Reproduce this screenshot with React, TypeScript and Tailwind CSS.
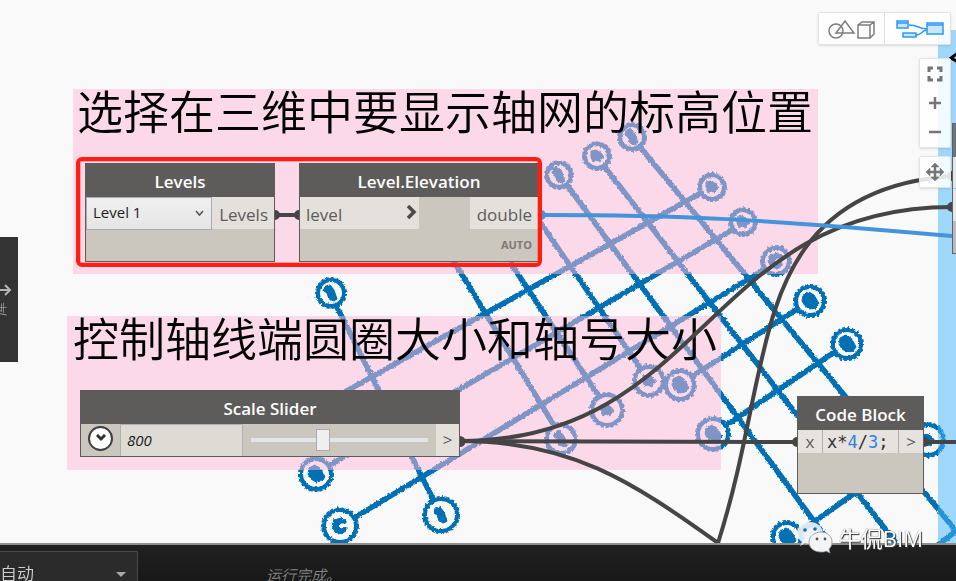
import React from 'react';

type Point = [number, number];

const gridLines: [Point, Point][] = [
  [[336, 305], [434, 501]],
  [[453, 260], [555, 427]],
  [[510, 262], [600, 398]],
  [[540, 222], [641, 369]],
  [[567, 185], [830, 543]],
  [[604, 166], [896, 543]],
  [[640, 147], [966, 543]],
  [[701, 193], [300, 417]],
  [[732, 230], [330, 465]],
  [[765, 269], [354, 518]],
  [[799, 308], [691, 377]],
  [[836, 351], [725, 426]],
  [[920, 447], [798, 533]],
  [[956, 531], [938, 545]],
];

const bubbles: { x: number; y: number; r: number; shape: number }[] = [
  { x: 559, y: 175, r: 12, shape: 1 },
  { x: 597, y: 156, r: 12, shape: 0 },
  { x: 632, y: 137, r: 12, shape: 1 },
  { x: 712, y: 187, r: 12, shape: 0 },
  { x: 743, y: 222, r: 12, shape: 0 },
  { x: 776, y: 261, r: 13, shape: 2 },
  { x: 810, y: 301, r: 14, shape: 3 },
  { x: 847, y: 344, r: 14, shape: 3 },
  { x: 331, y: 293, r: 13, shape: 1 },
  { x: 441, y: 515, r: 16, shape: 1 },
  { x: 316, y: 474, r: 15, shape: 3 },
  { x: 340, y: 526, r: 16, shape: 2 },
  { x: 561, y: 439, r: 14, shape: 1 },
  { x: 607, y: 410, r: 15, shape: 0 },
  { x: 649, y: 381, r: 14, shape: 0 },
  { x: 680, y: 385, r: 14, shape: 3 },
  { x: 713, y: 434, r: 15, shape: 3 },
  { x: 928, y: 440, r: 15, shape: 0 },
  { x: 787, y: 537, r: 14, shape: 3 },
];

const marks = [
  'M-6-5L-1-6L4-3L7 1L4 3L3 6L-1 4L-4 6L-6 1Z',
  'M-6-7L-1-8L3-3L6 6L3 8L-2 6L-4 0L-7-2Z',
  'M-6-6L1-8L6-6L6-3L1-3L-2 0L1 3L6 1L6 5L1 8L-5 6L-8 0Z',
  'M-7-6L-1-9L4-6L7-1L9 3L6 7L0 8L-5 5L-8 0Z',
];

const Geometry: React.FC = () => (
  <svg className="absolute inset-0 h-full w-full" aria-hidden="true">
    <defs>
      <filter id="rough" filterUnits="userSpaceOnUse" x="280" y="110" width="700" height="450">
        <feTurbulence type="fractalNoise" baseFrequency="0.4" numOctaves="2" seed="4" />
        <feDisplacementMap in="SourceGraphic" scale="3" xChannelSelector="R" yChannelSelector="G" />
      </filter>
    </defs>
    <g filter="url(#rough)" stroke="#0070b5" fill="none">
      {gridLines.map(([a, b], i) => (
        <line key={i} x1={a[0]} y1={a[1]} x2={b[0]} y2={b[1]} strokeWidth="5.500" />
      ))}
      {bubbles.map((b, i) => (
        <g key={i} transform={`translate(${b.x} ${b.y})`}>
          <circle r={b.r} strokeWidth="4" fill="#f9f9f9" />
          <circle r={b.r + 2} strokeWidth="2" strokeDasharray="3 2" />
          <path d={marks[b.shape]} fill="#0070b5" strokeWidth="1" />
        </g>
      ))}
    </g>
  </svg>
);

const Wires: React.FC = () => (
  <svg className="pointer-events-none absolute inset-0 h-full w-full" fill="none" aria-hidden="true">
    <g stroke="#454545" strokeWidth="4">
      <path d="M275 215H299" />
      <path d="M460 441C705 441 707 207 952 207" />
      <path d="M460 441L797 442" />
      <path d="M460 441C570 441 630 480 718 543" />
      <path d="M718 543C738 480 747 425 757 380C775 300 795 187 952 176" />
      <path d="M924 442H956" />
    </g>
    <path d="M541 215C680 215 760 219 952 236" stroke="#4493db" strokeWidth="4" />
    <g fill="#454545">
      <path d="M275 210a5 5 0 0 1 0 10zM299 210a5 5 0 0 0 0 10zM460 436a5 5 0 0 1 0 11zM797 437a5 5 0 0 0 0 10zM924 437a5 5 0 0 1 0 10zM952 202a5 5 0 0 0 0 10zM952 171a5 5 0 0 0 0 10z" />
    </g>
    <path d="M541 210a5 5 0 0 1 0 10z" fill="#4493db" />
    <path d="M958 53L951 58L958 62" stroke="#000" strokeWidth="3" />
  </svg>
);

const Group: React.FC<{ title: string; className: string }> = ({ title, className }) => (
  <section className={`absolute bg-[#fdb9d7]/50 ${className}`}>
    <h2 className="whitespace-nowrap text-[46px] leading-[44px] font-[350] text-black">{title}</h2>
  </section>
);

const Node: React.FC<{ title: string; className: string; children: React.ReactNode }> = ({
  title,
  className,
  children,
}) => (
  <article className={`absolute flex flex-col border border-[#5e5c5a] bg-[#cbc6be] ${className}`}>
    <h3 className="h-[33px] shrink-0 bg-[#5e5c5a] pt-1 text-center text-[17px] leading-7 font-semibold text-white">
      {title}
    </h3>
    {children}
  </article>
);

const toolPanel = 'border border-[#e3e3e3] bg-white/85 shadow-sm rounded-xs';

const Toolbar: React.FC = () => (
  <div className="absolute top-3 right-[5px] flex flex-col items-end">
    <div className={`flex h-[33px] w-[133px] ${toolPanel}`}>
      <button aria-label="Geometry view" className="flex flex-1 items-center justify-center border-r border-[#e0e0e0]">
        <svg width="48" height="22" fill="none" stroke="#7d7d7d" strokeWidth="1.5">
          <circle cx="8" cy="13" r="7" />
          <path d="M8 15L17 3L26 15ZM30 7H42V20H30ZM30 7L34 4H46V16L42 20M42 7L46 4" />
        </svg>
      </button>
      <button aria-label="Graph view" className="flex flex-1 items-center justify-center">
        <svg className="ml-1" width="48" height="20" fill="#cbe6fb" stroke="#2b9af3" strokeWidth="1.5">
          <path d="M13 6C23 6 20 9 31 10M20 16C27 16 24 12 31 11" fill="none" />
          <path d="M1 2H12V9H1ZM1 4H12M7 14H20V18H7ZM31 4H47V15H31ZM31 6H47" />
        </svg>
      </button>
    </div>
    <div className={`mt-[13px] flex h-[90px] w-8 flex-col ${toolPanel}`}>
      <button aria-label="Fit to view" className="flex flex-1 items-center justify-center">
        <svg width="16" height="16" fill="none" stroke="#757575" strokeWidth="3">
          <path d="M2 6V2H6M10 2H14V6M14 10V14H10M6 14H2V10" />
        </svg>
      </button>
      <button aria-label="Zoom in" className="flex flex-1 items-center justify-center">
        <svg width="14" height="14" stroke="#757575" strokeWidth="2.500">
          <path d="M1 7H13M7 1V13" />
        </svg>
      </button>
      <button aria-label="Zoom out" className="flex flex-1 items-center justify-center">
        <svg width="14" height="14" stroke="#757575" strokeWidth="2.500">
          <path d="M1 7H13" />
        </svg>
      </button>
    </div>
    <button aria-label="Pan" className={`mt-2 flex h-8 w-8 items-center justify-center ${toolPanel}`}>
      <svg width="18" height="18" fill="#757575">
        <path d="M9 0L13 4H10V8H14V5L18 9L14 13V10H10V14H13L9 18L5 14H8V10H4V13L0 9L4 5V8H8V4H5Z" stroke="#757575" strokeWidth="0.5" />
      </svg>
    </button>
  </div>
);

const WeChat: React.FC = () => (
  <svg width="37" height="33" aria-hidden="true">
    <path d="M14 1C6 1 1 6 1 12C1 16 3 19 6 21L4 25L9 22C11 23 14 23 16 23C25 22 27 17 27 12C26 5 21 1 14 1Z" fill="#eef3f6" fillOpacity="0.9" />
    <path d="M25 11C18 11 13 16 13 21C13 27 18 31 25 31C27 31 29 31 30 30L34 32L33 28C35 26 36 24 36 21C36 15 31 11 25 11Z" fill="#f4f4f4" stroke="#8b979f" strokeWidth="0.8" />
    <g fill="#176ca4">
      <circle cx="9" cy="9" r="1.8" />
      <circle cx="19" cy="8" r="1.8" />
    </g>
    <g fill="#555">
      <circle cx="21" cy="18" r="1.4" />
      <circle cx="29" cy="18" r="1.4" />
    </g>
  </svg>
);

export default function App() {
  return (
    <main className="relative flex h-screen flex-col overflow-hidden bg-[#f9f9f9] font-['Open_Sans','Noto_Sans_CJK_SC',sans-serif]">
      <div className="relative flex-1 overflow-hidden">
        <Geometry />
        <Group title="选择在三维中要显示轴网的标高位置" className="top-[89px] left-[73px] h-[185px] w-[745px] pl-1" />
        <Group title="控制轴线端圆圈大小和轴号大小" className="top-[316px] left-[67px] h-[154px] w-[654px] pl-1.5" />
        <div className="absolute top-[30px] left-[938px] h-full w-full bg-[#47b7fd]/50" />
        <Wires />

        <Node title="Levels" className="top-[163px] left-[85px] h-[99px] w-[190px]">
          <div className="flex h-8 text-[17px] leading-[35px] text-[#5e5c5a]">
            <div className="relative h-[33px] w-[126px]">
              <select
                aria-label="Level"
                className="block h-full w-full appearance-none border border-[#a8abb0] bg-linear-to-b from-[#f0f0f0] to-[#e5e5e5] px-1.5 pb-1 text-[15px] leading-6 text-[#1c1c1c]"
              >
                <option>Level 1</option>
              </select>
              <svg className="pointer-events-none absolute top-3 right-2" width="9" height="8" fill="none" stroke="#555" strokeWidth="1.5">
                <path d="M1 2L4.500 6L8 2" />
              </svg>
            </div>
            <span className="flex-1 bg-[#e4e0db] pr-1.5 text-right">Levels</span>
          </div>
        </Node>

        <Node title="Level.Elevation" className="top-[163px] left-[299px] h-[99px] w-[240px]">
          <div className="flex h-8 justify-between text-[17px] leading-[35px] text-[#5e5c5a]">
            <span className="flex w-[119px] justify-between bg-[#e4e0db] pr-0.5 pl-1.5">
              level
              <svg className="mt-2" width="11" height="16" fill="none" stroke="#4c4a48" strokeWidth="3.500">
                <path d="M2 1L8 7L2 13" />
              </svg>
            </span>
            <span className="w-[68px] bg-[#e4e0db] pr-1.5 text-right">double</span>
          </div>
          <span className="pr-1.5 text-right text-[11px] leading-8 font-bold text-[#7c7974]">AUTO</span>
        </Node>

        <div className="absolute top-[157px] left-[76px] h-[110px] w-[466px] rounded-md border-4 border-[#ff1f12] ring-1 ring-[#ff1f12]/30 ring-inset" />

        <Node title="Scale Slider" className="top-[390px] left-[80px] h-[67px] w-[380px]">
          <div className="flex h-8 items-stretch">
            <div className="flex w-[39px] items-center justify-center">
              <button
                aria-label="Expand"
                className="mb-1 flex h-[25px] w-[25px] items-center justify-center rounded-full border-2 border-[#3f3f3f] bg-white"
              >
                <svg width="12" height="8" fill="none" stroke="#333" strokeWidth="3">
                  <path d="M2 1L6 5L10 1" />
                </svg>
              </button>
            </div>
            <input
              aria-label="Scale"
              defaultValue="800"
              className="w-[123px] border-x border-t border-[#aeb0b4] bg-[#dedbd5] px-1.5 text-[15px] text-[#1c1c1c] italic"
            />
            <input
              type="range"
              aria-label="Scale slider"
              min="0"
              max="1000"
              defaultValue="400"
              className="mx-2 min-w-0 flex-1 appearance-none bg-transparent [&::-webkit-slider-runnable-track]:h-1 [&::-webkit-slider-runnable-track]:bg-[#e3e6e8] [&::-webkit-slider-thumb]:-mt-[9px] [&::-webkit-slider-thumb]:h-[22px] [&::-webkit-slider-thumb]:w-3.5 [&::-webkit-slider-thumb]:appearance-none [&::-webkit-slider-thumb]:border [&::-webkit-slider-thumb]:border-[#a9abaf] [&::-webkit-slider-thumb]:bg-[#efefef]"
            />
            <span className="w-[23px] bg-[#e4e0db] text-center text-[17px] leading-8 text-[#5e5c5a]">&gt;</span>
          </div>
        </Node>

        <Node title="Code Block" className="top-[396px] left-[797px] h-[98px] w-[127px]">
          <div className="flex h-[23px] bg-[#e6e2de] text-[17px] leading-6 text-[#5e5c5a]">
            <span className="w-6 text-center">x</span>
            <code className="flex-1 border-x border-[#b2b0ad] pl-1 font-['DejaVu_Sans_Mono',monospace] text-[#333]">
              x*<span className="text-[#2b83e6]">4</span>/<span className="text-[#2b83e6]">3</span>;
            </code>
            <span className="w-6 text-center">&gt;</span>
          </div>
        </Node>

        <div className="absolute top-[123px] left-[952px] h-[131px] w-48 border border-[#5f6468] bg-[#b9bdbd]">
          <div className="h-[33px] bg-[#6d757a]" />
          <div className="h-8 border-b border-[#b9bdbd] bg-[#e3e7e7]" />
          <div className="h-8 bg-[#e3e7e7]" />
        </div>

        <Toolbar />

        <aside className="absolute top-[237px] left-0 flex h-[125px] w-[18px] flex-col justify-center overflow-hidden bg-[#333]">
          <button aria-label="Show library" className="-ml-1 flex w-4 flex-col text-[#b5b5b5]">
            <svg width="16" height="14" fill="none" stroke="currentColor" strokeWidth="2">
              <path d="M0 7H13M9 2L14 7L9 12" />
            </svg>
            <span className="mt-1 -ml-1 w-4 -rotate-90 text-center text-[14px] leading-4 font-light">库</span>
          </button>
        </aside>
      </div>

      <footer className="flex h-[38px] items-start gap-32 overflow-hidden border-t-2 border-[#8f8f8f] bg-linear-to-b from-[#212121] to-[#181818]">
        <div className="relative mt-1.5 h-[46px] w-[138px] shrink-0">
          <select
            aria-label="Run mode"
            className="block h-full w-full appearance-none border border-l-0 border-[#4a4a4a] bg-[#2b2b2b] text-[17px] font-[350] text-[#d0d0d0]"
          >
            <option>自动</option>
          </select>
          <svg className="pointer-events-none absolute top-[21px] right-3" width="10" height="6" fill="#a8a8a8">
            <path d="M0 0H10L5 5Z" />
          </svg>
        </div>
        <p className="mt-[18px] text-[15px] leading-6 font-[350] text-[#858585] italic">运行完成。</p>
      </footer>

      <div className="absolute right-[33px] bottom-[27px] flex items-center gap-1.5">
        <WeChat />
        <span className="text-[22px] leading-8 font-normal text-white [text-shadow:1px_1px_1px_#333,0_0_1px_#555]">牛侃BIM</span>
      </div>
    </main>
  );
}
